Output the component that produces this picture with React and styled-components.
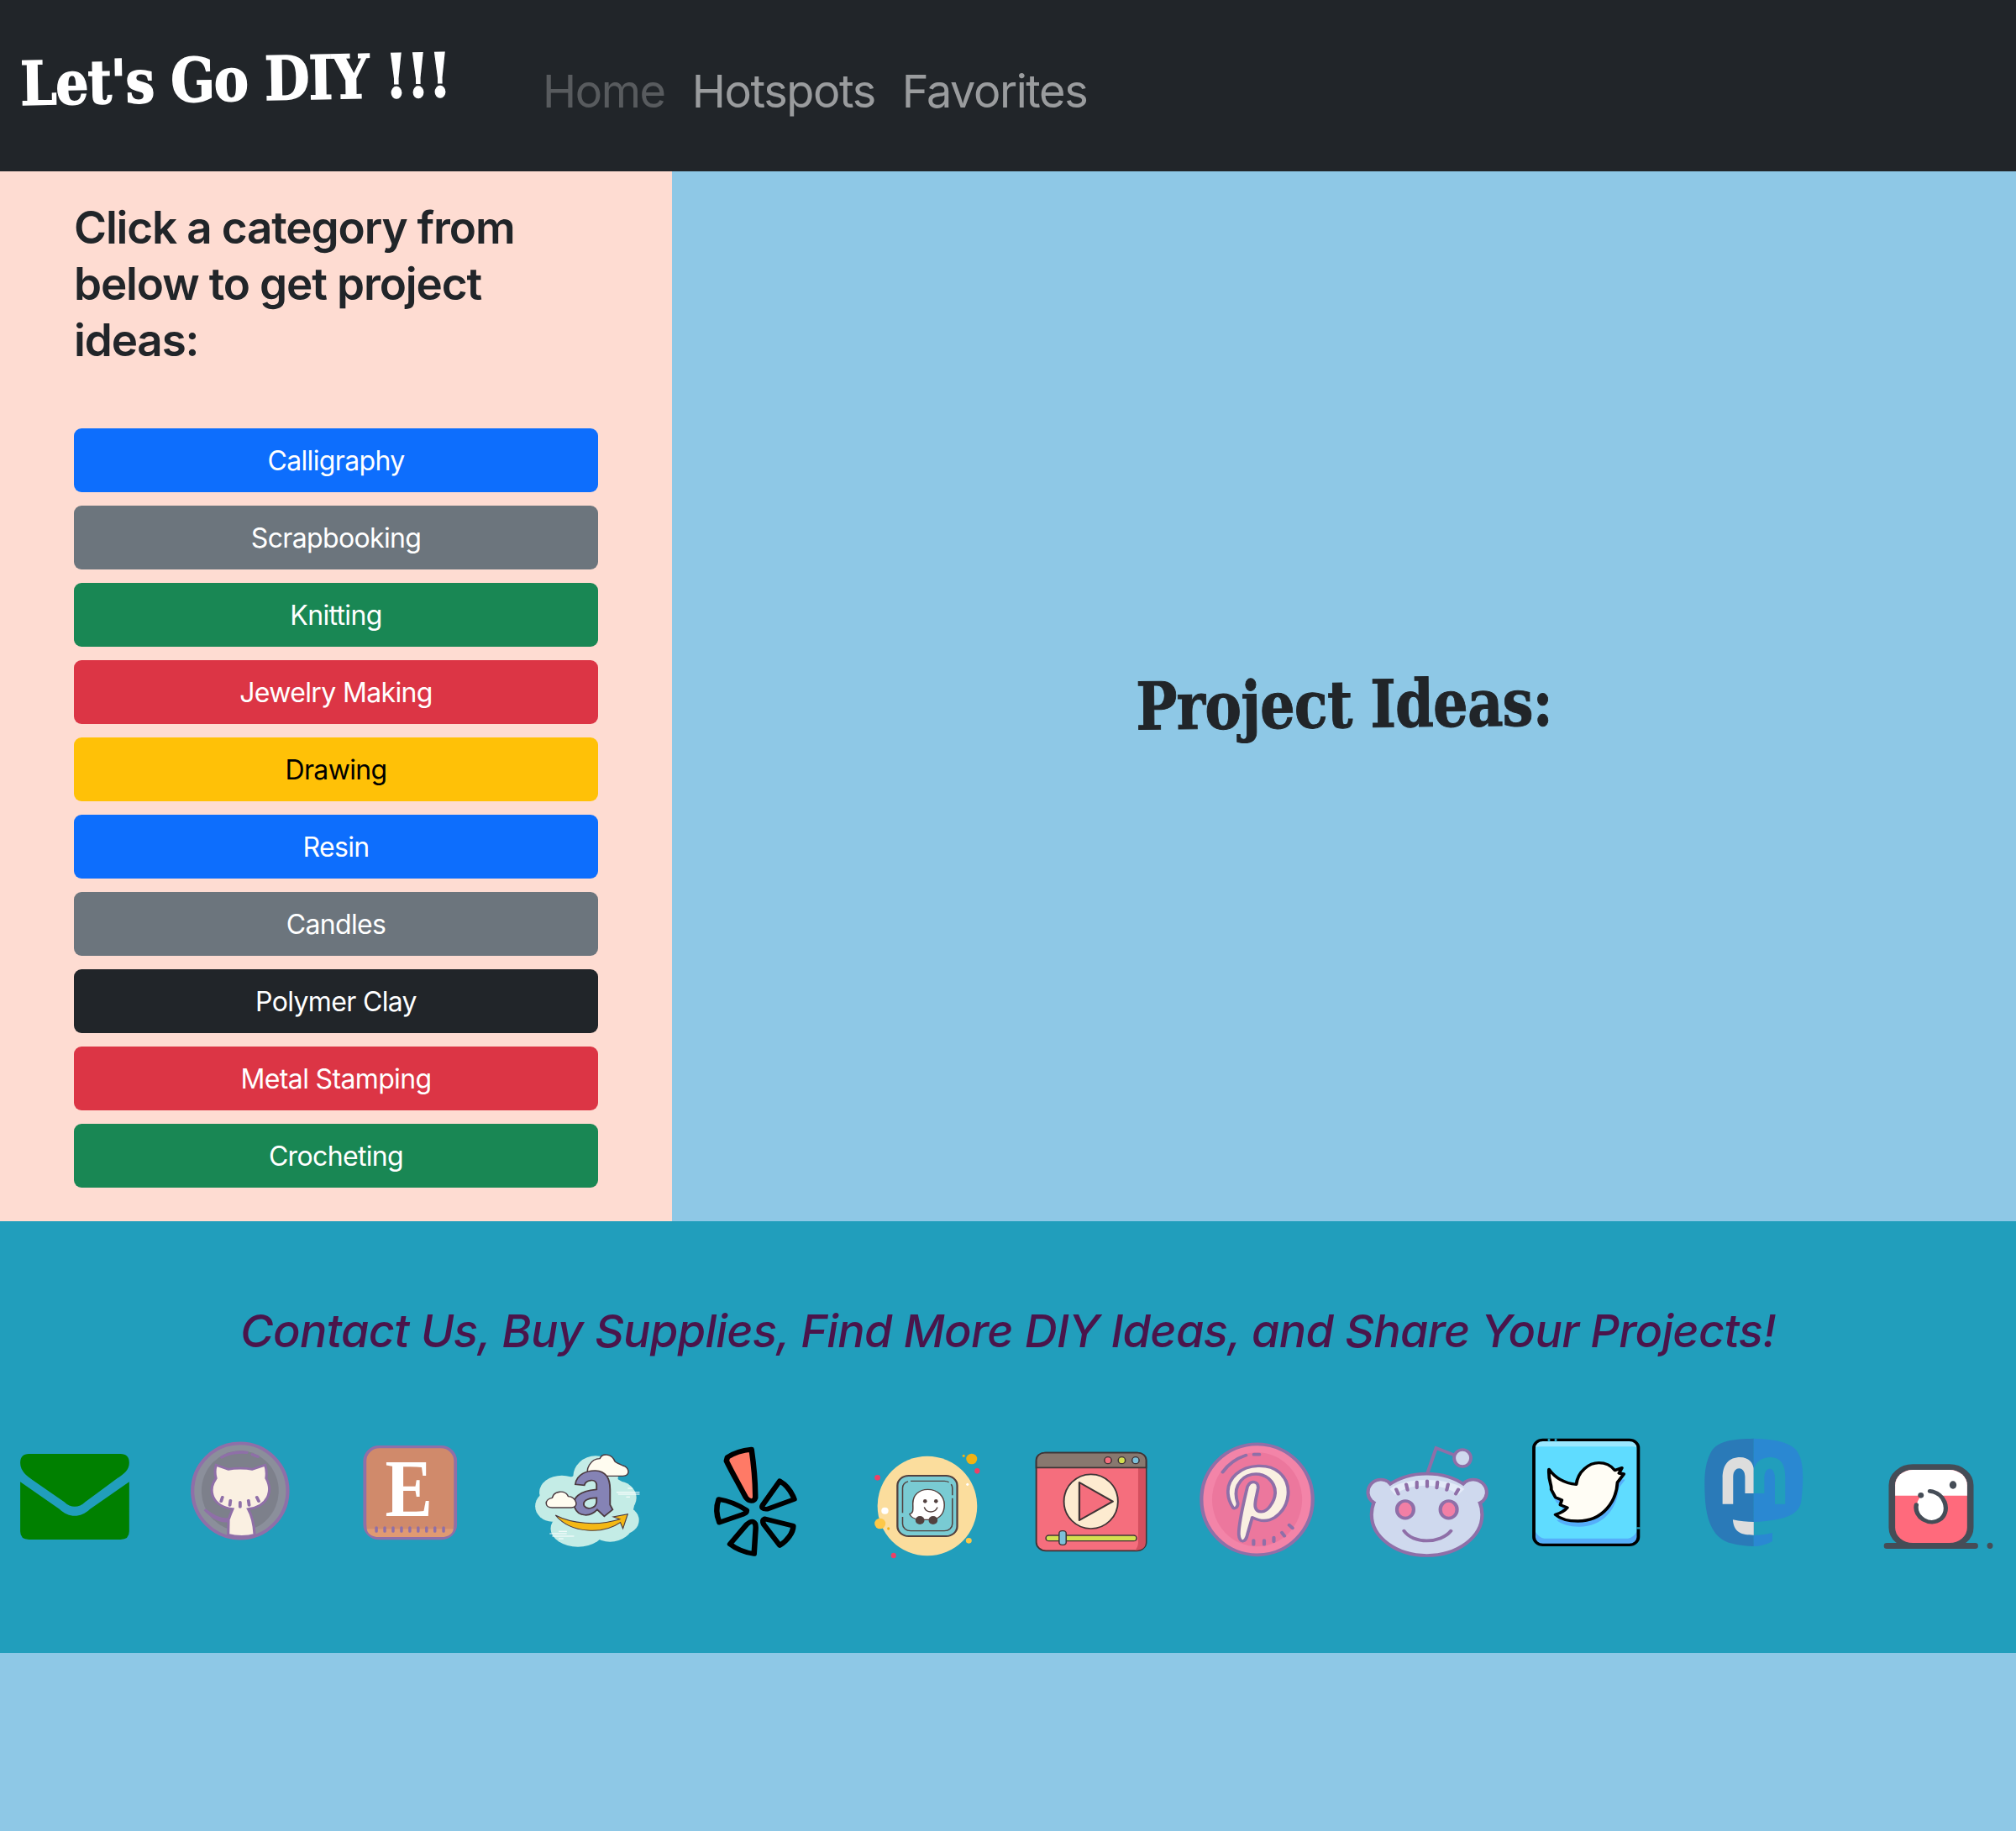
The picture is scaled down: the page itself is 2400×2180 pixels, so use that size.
import React from "react";
import styled, { createGlobalStyle } from "styled-components";

const Global = createGlobalStyle`
  html, body { margin: 0; padding: 0; }
  body {
    background: #8ec8e6;
    font-family: Inter, "Liberation Sans", sans-serif;
    color: #212529;
  }
`;
const Nav = styled.nav`
  height: 204px; background: #212529; display: flex; align-items: center; padding: 0 24px;
`;
const Brand = styled.div`
  font-family: "DejaVu Serif", serif; font-weight: 700; font-size: 72px; color: #fff;
  width: 622px; flex: none; white-space: nowrap; letter-spacing: -1.5px; transform-origin: left center;
  transform: translateY(-3px) scaleX(.86) rotate(-1deg);
  -webkit-text-stroke: 1.5px #fff;
`;
const Links = styled.div`display: flex; gap: 32px; padding-top: 14px;`;
const NavLink = styled.a`
  font-size: 54px; letter-spacing: -1.4px; line-height: 1; color: ${p => p.$active ? "rgba(255,255,255,.25)" : "rgba(255,255,255,.55)"};
`;
const Middle = styled.div`display: flex; height: 1250px;`;
const Side = styled.aside`
  width: 800px; flex: none; background: #fedcd2; padding: 34px 88px 0; box-sizing: border-box;
`;
const SideTitle = styled.h2`
  margin: 0 0 71px; font-size: 53px; line-height: 67px; font-weight: 600; letter-spacing: -1.15px;
`;
const BtnCol = styled.div`display: flex; flex-direction: column; gap: 16px;`;
const Btn = styled.button`
  height: 76px; border: 0; border-radius: 9px; background: ${p => p.$bg}; color: ${p => p.$fg || "#fff"};
  font: 400 32px Inter, "Liberation Sans", sans-serif; letter-spacing: -.65px; padding: 0;
`;
const Main = styled.main`flex: 1; display: flex; align-items: center; justify-content: center;`;
const Ideas = styled.h1`
  margin: 18px 0 0; font-family: "DejaVu Serif", serif; font-weight: 700; font-size: 78px; letter-spacing: -1px;
  transform: scaleX(.84) rotate(-.5deg);
  -webkit-text-stroke: 1px #212529;
`;
const Footer = styled.footer`height: 514px; background: #219ebc; display: flex; flex-direction: column;`;
const FootTitle = styled.h3`
  margin: 98px 0 0; text-align: center; font-size: 54px; line-height: 66px; font-style: italic; font-weight: 500;
  color: #4a154b; letter-spacing: -.68px;
`;
const Icons = styled.div`display: flex; margin-top: 62px;`;
const IconSvg = styled.svg`display: block; flex: none; width: 200px; height: 200px; overflow: visible;`;

const cats = [
  ["Calligraphy", "#0d6efd"], ["Scrapbooking", "#6c757d"], ["Knitting", "#198754"], ["Jewelry Making", "#dc3545"],
  ["Drawing", "#ffc107", "#000"], ["Resin", "#0d6efd"], ["Candles", "#6c757d"], ["Polymer Clay", "#212529"],
  ["Metal Stamping", "#dc3545"], ["Crocheting", "#198754"],
];
const P = "#8f6fa8";
const BG = "#219ebc";
const I = ({ k, children }) => (
  <IconSvg viewBox={`${k * 522.667} 0 522.667 600`} preserveAspectRatio="none">{children}</IconSvg>
);

export default function App() {
  return (
    <>
      <Global />
      <Nav>
        <Brand>Let's Go DIY !!!</Brand>
        <Links>
          <NavLink $active>Home</NavLink><NavLink>Hotspots</NavLink><NavLink>Favorites</NavLink>
        </Links>
      </Nav>
      <Middle>
        <Side>
          <SideTitle>Click a category from below to get project ideas:</SideTitle>
          <BtnCol>{cats.map(([t, b, f]) => <Btn key={t} $bg={b} $fg={f}>{t}</Btn>)}</BtnCol>
        </Side>
        <Main><Ideas>Project Ideas:</Ideas></Main>
      </Middle>
      <Footer>
        <FootTitle>Contact Us, Buy Supplies, Find More DIY Ideas, and Share Your Projects!</FootTitle>
        <Icons>
          {/* mail */}
          <I k={0}>
            <path fill="#008000" d="M90 153H375Q402 153 402 185C402 210 385 225 365 240L265 325C245 347 220 347 200 325L100 245C85 232 63 215 63 185Q63 153 90 153Z"/>
            <path fill="#008000" d="M63 253L185 350C215 382 250 382 280 350L402 253V430Q402 459 375 459H90Q63 459 63 430Z"/>
          </I>
          {/* github */}
          <I k={1}>
            <ellipse cx="747" cy="285" rx="148" ry="170" fill="#8b8f9b" stroke={P} strokeWidth="11"/>
            <ellipse cx="747" cy="285" rx="120" ry="143" fill="#7d808b"/>
            <path fill="#faf0e2" stroke={P} strokeWidth="8" d="M672 193L710 208C730 203 765 203 785 208L825 193C830 210 830 225 828 240C850 285 835 340 772 350C782 370 790 400 792 442C770 450 735 450 710 442L711 392C690 398 665 385 637 352C655 365 680 392 712 385C716 370 720 360 724 350C660 340 645 285 672 240C668 225 668 210 672 193Z"/>
            <path d="M692 308L688 322M717 320L715 336M747 326V342M773 320L775 336M799 308L805 322M690 165C710 150 745 145 768 148M785 155L802 163" stroke={P} strokeWidth="10" strokeLinecap="round" fill="none"/>
          </I>
          {/* etsy */}
          <I k={2}>
            <rect x="1135" y="128" width="282" height="327" rx="45" ry="50" fill="#d08a6b" stroke={P} strokeWidth="10"/>
            <path d="M1140 421H1412V410Q1412 450 1370 450H1182Q1140 450 1140 410Z" fill="#e09a72"/>
            <text transform="translate(1272 375) scale(.76 1)" textAnchor="middle" fontFamily="Liberation Serif" fontWeight="700" fontSize="291" fill="#fff">E</text>
            <path d="M1171 416V430M1197 416V430M1223 416V430M1249 416V430M1275 416V430M1301 416V430M1327 416V430M1353 416V430M1380 416V430" stroke={P} strokeWidth="9" strokeLinecap="round"/>
          </I>
          {/* amazon */}
          <I k={0}>
            <g fill="#c4ece6">
              <ellipse cx="285" cy="235" rx="70" ry="75"/><ellipse cx="180" cy="290" rx="70" ry="60"/><ellipse cx="150" cy="340" rx="53" ry="55"/>
              <ellipse cx="230" cy="420" rx="85" ry="65"/><ellipse cx="330" cy="405" rx="70" ry="62"/><ellipse cx="370" cy="390" rx="50" ry="50"/>
              <ellipse cx="352" cy="310" rx="60" ry="60"/><ellipse cx="275" cy="330" rx="130" ry="110"/>
            </g>
            <path fill="#fffcf0" stroke="#4b3a40" strokeWidth="4" d="M265 232H370C395 232 390 200 370 195C360 190 350 185 345 180C335 150 305 150 298 170C270 170 250 210 265 232Z"/>
            <path fill="#8583b5" stroke="#4b3a40" strokeWidth="5" fillRule="evenodd" d="M222 262C225 225 260 212 285 213C320 215 330 245 330 280V335L338 352L312 376L290 352C270 378 232 380 220 345C210 310 235 285 288 280V262C285 240 255 245 250 265ZM288 310C255 310 243 325 250 340C258 352 285 350 288 325Z"/>
            <path fill="#f4b815" stroke="#4b3a40" strokeWidth="3" d="M160 372C210 402 290 412 360 386L340 378L385 368L370 420L362 398C310 440 210 440 160 372Z"/>
            <path fill="#fffcf0" stroke="#4b3a40" strokeWidth="4" d="M150 345C125 345 125 315 150 310C155 285 190 280 200 305C225 305 235 345 210 345Z"/>
            <path d="M350 290H422M385 276H400M355 297H422M380 307H392M142 438H195M170 430H196M150 447H218M170 456H185" stroke="#fff" strokeWidth="3"/>
          </I>
          {/* yelp */}
          <I k={1}>
            <g fill="none" stroke="#000" strokeWidth="17" strokeLinejoin="round">
              <path fill="#ff7a66" d="M695 165C715 150 745 140 770 137C778 200 782 260 782 310C778 325 762 325 752 308C730 260 705 210 692 178Z"/>
              <path d="M805 335L858 250C880 265 895 290 903 315L820 350C805 352 800 345 805 335Z"/>
              <path d="M668 315C695 320 730 335 755 355C755 365 750 365 740 370L670 398C660 370 660 340 668 315Z"/>
              <path d="M775 395C785 400 783 410 783 420L778 510C750 505 725 495 703 475L755 405C762 398 768 393 775 395Z"/>
              <path d="M810 385L900 410C900 435 880 465 858 480L808 405C803 392 805 388 810 385Z"/>
            </g>
          </I>
          {/* waze */}
          <I k={2}>
            <ellipse cx="1317" cy="339" rx="155" ry="178" fill="#fbdd9d"/>
            <ellipse cx="1455" cy="171" rx="17" ry="19" fill="#f0b215"/><ellipse cx="1430" cy="160" rx="4" ry="5" fill="#f0b215"/>
            <ellipse cx="1472" cy="214" rx="8" ry="10" fill="#ec4067"/><ellipse cx="1162" cy="238" rx="9" ry="10" fill="#ec4067"/>
            <ellipse cx="1185" cy="356" rx="11" ry="12" fill="#fff"/><ellipse cx="1170" cy="402" rx="17" ry="19" fill="#fdc847"/>
            <ellipse cx="1196" cy="420" rx="4" ry="5" fill="#f0b215"/><ellipse cx="1442" cy="262" rx="4" ry="5" fill="#fff"/>
            <ellipse cx="1446" cy="463" rx="9" ry="10" fill="#fdc847"/><ellipse cx="1212" cy="516" rx="8" ry="10" fill="#ec4067"/>
            <rect x="1224" y="231" width="186" height="216" rx="35" fill="#79cbd3" stroke="#52413f" strokeWidth="6"/>
            <rect x="1240" y="250" width="155" height="178" rx="25" fill="none" stroke="#52413f" strokeWidth="4" strokeDasharray="120 10 40 10 300 14"/>
            <path d="M1318 280C1350 280 1370 305 1370 335C1370 360 1360 385 1330 388H1290C1275 385 1265 378 1262 368C1275 365 1272 350 1272 330C1272 300 1292 280 1318 280Z" fill="#fff" stroke="#52413f" strokeWidth="4"/>
            <ellipse cx="1310" cy="322" rx="6" ry="7" fill="#52413f"/><ellipse cx="1344" cy="322" rx="6" ry="7" fill="#52413f"/>
            <path d="M1308 345C1315 365 1340 365 1348 345" fill="none" stroke="#52413f" strokeWidth="4" strokeLinecap="round"/>
            <ellipse cx="1294" cy="390" rx="14" ry="15" fill="#52413f"/><ellipse cx="1335" cy="390" rx="14" ry="15" fill="#52413f"/>
          </I>
          {/* video */}
          <I k={0}>
            <rect x="88" y="149" width="342" height="350" rx="30" fill="#f56e7d" stroke="#3f3436" strokeWidth="5"/>
            <path d="M405 204H428V470Q428 497 395 497Q405 485 405 470Z" fill="#d4505f"/>
            <path d="M88 202V175A26 26 0 0 1 114 149H404A26 26 0 0 1 430 175V202Z" fill="#88786f" stroke="#3f3436" strokeWidth="5"/>
            <ellipse cx="311" cy="176" rx="11" ry="12" fill="#f56e7d" stroke="#3f3436" strokeWidth="4"/>
            <ellipse cx="354" cy="176" rx="11" ry="12" fill="#d4df50" stroke="#3f3436" strokeWidth="4"/>
            <ellipse cx="397" cy="176" rx="11" ry="12" fill="#7cc0da" stroke="#3f3436" strokeWidth="4"/>
            <ellipse cx="258" cy="323" rx="84" ry="97" fill="#fdebd0" stroke="#3f3436" strokeWidth="5"/>
            <path d="M222 255L326 323L222 390Z" fill="#f56e7d" stroke="#3f3436" strokeWidth="6" strokeLinejoin="round"/>
            <rect x="118" y="444" width="282" height="20" rx="9" fill="#d4df50" stroke="#3f3436" strokeWidth="4"/>
            <rect x="159" y="428" width="22" height="50" rx="9" fill="#7cc0da" stroke="#3f3436" strokeWidth="4"/>
          </I>
          {/* pinterest */}
          <I k={1}>
            <ellipse cx="775" cy="316" rx="173" ry="198" fill="#f384a8" stroke={P} strokeWidth="11"/>
            <ellipse cx="775" cy="316" rx="140" ry="168" fill="#ec779d"/>
            <path fill="#faf0e2" stroke={P} strokeWidth="10" strokeLinejoin="round" d="M700 345C680 310 675 260 710 225C745 190 810 185 845 220C885 260 880 340 830 380C810 395 785 395 760 380L745 440C740 470 720 475 718 440C718 400 730 340 745 270C755 245 780 250 778 275C775 300 765 330 770 345C775 365 800 365 815 340C835 310 840 270 810 240C780 215 735 220 715 265C705 290 712 320 715 330C715 345 705 350 700 345Z"/>
            <path d="M668 218C685 190 710 170 740 158M765 155H782M764 462V476M797 462V476M827 452V466M852 434L860 446M875 407L885 418" stroke={P} strokeWidth="11" strokeLinecap="round" fill="none"/>
          </I>
          {/* reddit */}
          <I k={2}>
            <path d="M1305 222L1332 132L1390 158" fill="none" stroke={P} strokeWidth="11"/>
            <ellipse cx="1414" cy="168" rx="26" ry="30" fill="#cfd9ee" stroke={P} strokeWidth="10"/>
            <ellipse cx="1160" cy="290" rx="40" ry="45" fill="#cfd9ee" stroke={P} strokeWidth="11"/>
            <ellipse cx="1447" cy="290" rx="42" ry="45" fill="#cfd9ee" stroke={P} strokeWidth="11"/>
            <ellipse cx="1303" cy="370" rx="172" ry="146" fill="#cfd9ee" stroke={P} strokeWidth="11"/>
            <ellipse cx="1160" cy="290" rx="34" ry="39" fill="#cfd9ee"/>
            <ellipse cx="1447" cy="290" rx="36" ry="39" fill="#cfd9ee"/>
            <path d="M1188 278C1230 235 1370 235 1420 278L1400 300C1360 255 1240 255 1205 300Z" fill="#e3eaf8"/>
            <ellipse cx="1236" cy="352" rx="26" ry="31" fill="#f27fa5" stroke={P} strokeWidth="11"/>
            <ellipse cx="1371" cy="352" rx="26" ry="31" fill="#f27fa5" stroke={P} strokeWidth="11"/>
            <path d="M1232 428C1260 475 1345 475 1378 428M1208 280L1214 296M1239 262L1243 282M1272 254V274M1304 250V270M1336 254L1334 274M1369 262L1365 282M1401 280L1393 296" fill="none" stroke={P} strokeWidth="11" strokeLinecap="round"/>
          </I>
          {/* twitter */}
          <I k={0}>
            <rect x="68" y="103" width="325" height="375" rx="28" fill="#5fdcff"/>
            <path d="M72 130Q72 108 95 108H366Q389 108 389 130Q380 125 366 127H95Q80 125 72 130Z" fill="#9be8ff"/>
            <path d="M72 430Q85 455 100 455H361Q376 455 389 430V450Q389 474 366 474H95Q72 474 72 450Z" fill="#55aefa"/>
            <path transform="translate(4 20)" fill="#55aefa" d="M115 208C135 240 165 258 200 262C205 215 240 185 270 185C295 185 312 200 320 212L342 203L333 222L348 225L328 255C325 320 285 393 205 393C175 393 150 385 135 370C150 365 165 355 172 345L150 335L155 318L135 308L122 280C125 265 112 250 115 208Z"/>
            <path fill="#fffdf5" stroke="#000" strokeWidth="10" strokeLinejoin="round" d="M115 208C135 240 165 258 200 262C205 215 240 185 270 185C295 185 312 200 320 212L342 203L333 222L348 225L328 255C325 320 285 393 205 393C175 393 150 385 135 370C150 365 165 355 172 345L150 335L155 318L135 308L122 280C125 265 112 250 115 208Z"/>
            <rect x="68" y="103" width="325" height="375" rx="28" fill="none" stroke="#000" strokeWidth="10"/>
            <path d="M115 98V109M136 98V109M387 418H399" stroke={BG} strokeWidth="7" fill="none"/>
          </I>
          {/* mastodon */}
          <I k={1}>
            <path fill="#2a7ab8" d="M752 98C690 100 640 105 620 145C598 190 598 240 600 300C603 390 625 455 680 472C705 480 730 483 752 483Z"/>
            <path fill="#2a88d2" d="M752 98C810 100 860 108 885 140C908 175 908 240 900 320C895 365 860 390 752 396V443C775 443 795 440 810 435V465C790 478 770 483 752 483Z"/>
            <path fill="#ddd" d="M655 332V240C655 190 675 165 710 165C735 165 752 185 752 210V294H725V235C725 195 688 195 688 235V332Z"/>
            <path fill={BG} d="M752 210C755 185 775 165 805 165C835 165 850 190 850 235V332H818V240C818 195 785 195 785 240V294H752Z"/>
            <path fill="#ddd" d="M687 388C710 394 730 396 752 396V443C715 443 690 435 687 388Z"/>
          </I>
          {/* instagram */}
          <I k={2}>
            <rect x="1182" y="200" width="244" height="281" rx="65" fill="#ff6a7c" stroke="#454d57" strokeWidth="20"/>
            <path d="M1192 302V265A55 55 0 0 1 1247 210H1361A55 55 0 0 1 1416 265V302Z" fill="#fff"/>
            <ellipse cx="1304" cy="342" rx="45" ry="53" fill="#fff"/>
            <path d="M1300 286C1345 292 1365 350 1335 385C1300 415 1250 380 1258 335" fill="none" stroke="#454d57" strokeWidth="14" strokeLinecap="round"/>
            <ellipse cx="1372" cy="264" rx="11" ry="14" fill="#454d57"/><ellipse cx="1272" cy="301" rx="9" ry="10" fill="#454d57"/>
            <rect x="1157" y="471" width="293" height="21" rx="9" fill="#454d57"/><ellipse cx="1487" cy="481" rx="9" ry="11" fill="#454d57"/>
          </I>
        </Icons>
      </Footer>
    </>
  );
}
